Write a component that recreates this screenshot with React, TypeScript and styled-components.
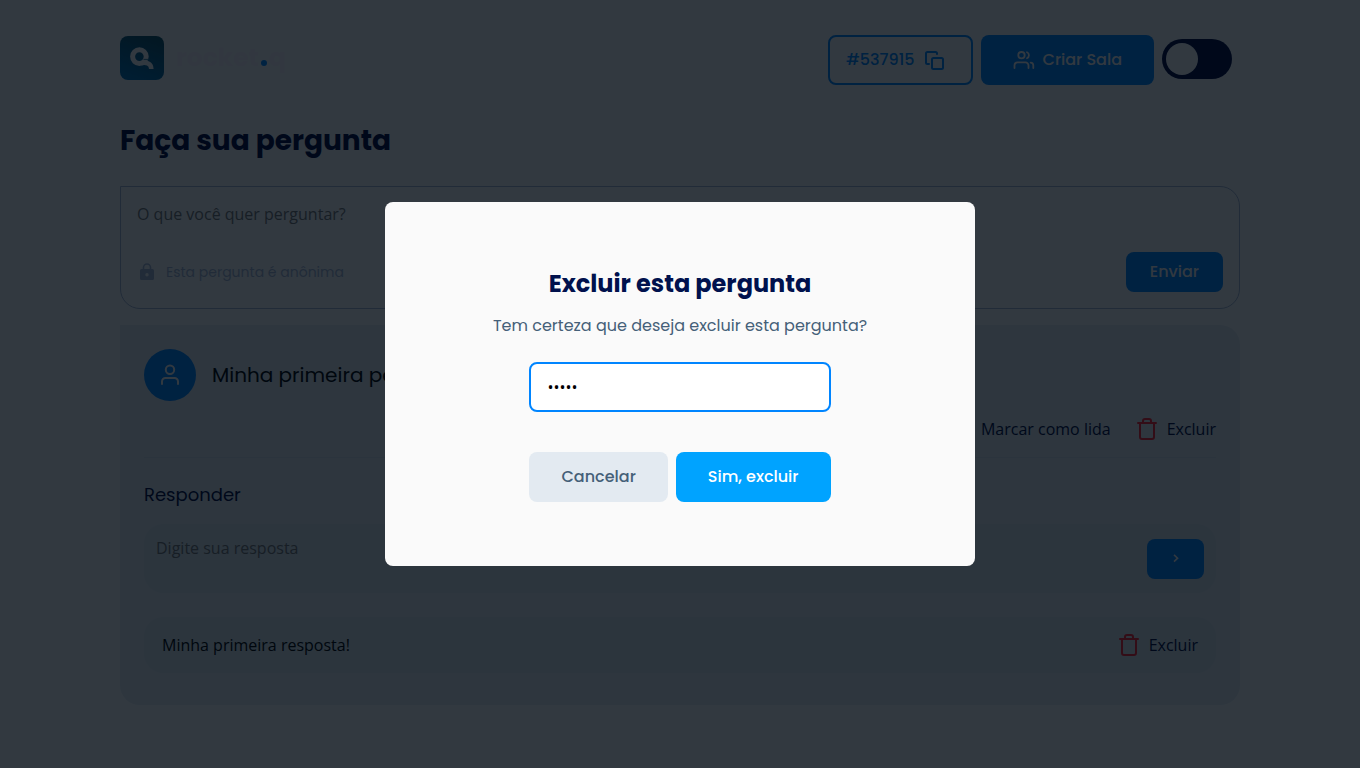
import React from "react";
import styled, { createGlobalStyle, css } from "styled-components";

const heading = `Poppins, "Open Sans", sans-serif`;
const body = `"Open Sans", "Noto Sans", sans-serif`;

const GlobalStyle = createGlobalStyle`
  *, *::before, *::after { box-sizing: border-box; margin: 0; padding: 0; }
  body { background: #fafafa; font: 400 16px/24px ${body}; color: #00093f; }
  button, input, textarea { font: inherit; }
  button { border: 0; background: none; cursor: pointer; }
  a { color: inherit; text-decoration: none; }
`;

const Page = styled.div`
  min-height: 100vh;
  padding: 0 24px;
`;

const Container = styled.div`
  max-width: 1120px;
  margin: 0 auto;
`;

const Header = styled.header`
  display: flex;
  align-items: center;
  justify-content: space-between;
  padding: 35px 8px 35px 0;
`;

const Brand = styled.a`
  display: flex;
  align-items: center;
  gap: 12px;
  padding-bottom: 4px;
`;

const Wordmark = styled.span`
  display: flex;
  align-items: baseline;
  font: 700 25px/42px ${heading};
  color: #fbeffa;
`;

const Dot = styled.i`
  width: 6px;
  height: 6px;
  margin: 0 2px;
  border-radius: 50%;
  background: #0085ff;
`;

const HeaderActions = styled.div`
  display: flex;
  align-items: center;
  gap: 8px;
`;

const Button = styled.button<{ $tone?: "outline" | "muted" | "bright"; $compact?: boolean }>`
  display: inline-flex;
  align-items: center;
  justify-content: center;
  gap: 8px;
  height: ${(p) => (p.$compact ? 40 : 50)}px;
  padding: 0 ${(p) => (p.$compact ? 24 : 32)}px;
  border-radius: 8px;
  font: 500 16px/24px ${heading};
  color: #fafafa;
  background: #0085ff;
  white-space: nowrap;
  ${(p) => p.$tone === "muted" && css`background: #e3eaf1; color: #456078;`}
  ${(p) => p.$tone === "bright" && css`background: #00a3ff; color: #fff;`}
  ${(p) => p.$tone === "outline" && css`
    gap: 10px;
    padding: 0 27px 0 16px;
    border: 2px solid #0085ff;
    background: none;
    color: #0085ff;
  `}
`;

const SendButton = styled(Button)`
  min-width: 57px;
`;

const Toggle = styled.input`
  appearance: none;
  display: flex;
  align-items: center;
  width: 70px;
  height: 40px;
  margin-bottom: 2px;
  padding: 4px;
  border-radius: 20px;
  background: #00093f;
  cursor: pointer;

  &::before {
    content: "";
    width: 32px;
    height: 32px;
    border-radius: 50%;
    background: #fafafa;
  }
  &:checked { justify-content: flex-end; }
`;

const PageTitle = styled.h1`
  font: 700 28px/42px ${heading};
  color: #00093f;
`;

const AskForm = styled.form`
  margin-top: 24px;
  padding: 15px 16px 16px;
  border: 1px solid #a5b4d2;
  border-radius: 0 20px 20px 20px;
`;

const TextArea = styled.textarea<{ $height: number }>`
  display: block;
  flex: 1;
  width: 100%;
  height: ${(p) => p.$height}px;
  border: 0;
  outline: 0;
  resize: none;
  background: none;
  color: #00093f;
  &::placeholder { color: #757575; opacity: 1; }
`;

const FormFooter = styled.div`
  display: flex;
  align-items: center;
  justify-content: space-between;
`;

const Anonymous = styled.p`
  display: flex;
  align-items: center;
  gap: 9px;
  font: 400 14px/20px ${heading};
  color: #a5b4d2;
`;

const QuestionCard = styled.section`
  margin: 16px 0 24px;
  padding: 24px 24px 32px;
  border-radius: 0 20px 20px 20px;
  background: #e3eaf1;
`;

const Question = styled.div`
  display: flex;
  align-items: center;
  gap: 16px;
  font: 400 20px/30px ${heading};
  color: #000;
`;

const Avatar = styled.span`
  display: grid;
  place-items: center;
  width: 52px;
  height: 52px;
  border-radius: 50%;
  background: #0085ff;
`;

const QuestionActions = styled.div`
  display: flex;
  justify-content: flex-end;
  gap: 24px;
  padding: 16px 0;
  border-bottom: 1px solid #d8e2ea;
`;

const Action = styled.button`
  display: inline-flex;
  align-items: center;
  gap: 8px;
  color: #00093f;
`;

const ReplyTitle = styled.h2`
  margin: 24px 0 16px;
  font: 400 18px/26px ${heading};
  color: #00093f;
`;

const ReplyForm = styled.form`
  display: flex;
  align-items: center;
  gap: 12px;
  padding: 12px;
  border-radius: 20px;
  background: #dbe4ea;
`;

const Reply = styled.div`
  display: flex;
  align-items: center;
  justify-content: space-between;
  margin-top: 24px;
  padding: 16px 18px;
  border-radius: 20px;
  background: #dbe4ea;
  color: #000;
`;

const Overlay = styled.div`
  position: fixed;
  inset: 0;
  display: grid;
  place-items: center;
  padding: 24px;
  background: rgba(0, 9, 18, 0.8);
`;

const Modal = styled.div`
  display: flex;
  flex-direction: column;
  align-items: center;
  width: 100%;
  max-width: 590px;
  padding: 64px 24px;
  border-radius: 8px;
  background: #fafafa;
  text-align: center;
`;

const ModalTitle = styled.h2`
  font: 700 24px/36px ${heading};
  color: #00114d;
`;

const ModalText = styled.p`
  margin: 12px 0 24px;
  font: 400 16px/24px ${heading};
  color: #456078;
`;

const ModalForm = styled.form`
  display: flex;
  flex-direction: column;
  gap: 40px;
`;

const Password = styled.input`
  width: 100%;
  height: 50px;
  padding: 0 16px;
  border: 2px solid #0085ff;
  border-radius: 8px;
  outline: 0;
  background: #fff;
  color: #000;
`;

const ModalButtons = styled.div`
  display: flex;
  gap: 8px;
`;

const LogoMark = () => (
  <svg width="44" height="44" viewBox="0 0 44 44" fill="none" aria-hidden="true">
    <defs>
      <linearGradient id="mark" x1="30" y1="0" x2="14" y2="44" gradientUnits="userSpaceOnUse">
        <stop stopColor="#0e4f66" />
        <stop offset="1" stopColor="#0070b4" />
      </linearGradient>
    </defs>
    <rect width="44" height="44" rx="8" fill="url(#mark)" />
    <circle cx="19.4" cy="20.6" r="6.8" stroke="#fafafa" strokeWidth="5" />
    <path d="M21 27.200c4.600-1.200 10.300 0 10.300 5.800" stroke="#fafafa" strokeWidth="4.600" />
    <path d="M23.500 23.400h4.800" stroke="#0b5f88" strokeWidth=".8" />
  </svg>
);

const CopyIcon = () => (
  <svg width="19" height="19" viewBox="0 0 19 19" fill="none" stroke="currentColor" strokeWidth="2" strokeLinecap="round" strokeLinejoin="round" aria-hidden="true">
    <rect x="7" y="7" width="11" height="11" rx="1.500" />
    <path d="M4 13H2.500A1.500 1.500 0 0 1 1 11.500v-9A1.500 1.500 0 0 1 2.500 1h8A1.500 1.500 0 0 1 12 2.500V3" />
  </svg>
);

const UsersIcon = () => (
  <svg width="22" height="18" viewBox="0 0 22 18" fill="none" stroke="currentColor" strokeWidth="1.800" strokeLinecap="round" aria-hidden="true">
    <circle cx="8.500" cy="4.200" r="3.200" />
    <path d="M1.500 17v-2.600a3 3 0 0 1 3-3h8a3 3 0 0 1 3 3V17M14 1.200a3.300 3.300 0 0 1 0 6M17.700 11.600a2.900 2.900 0 0 1 2.600 2.900V17" />
  </svg>
);

const UserIcon = () => (
  <svg width="20" height="22" viewBox="0 0 20 22" fill="none" stroke="#fafafa" strokeWidth="2" strokeLinecap="round" aria-hidden="true">
    <circle cx="10" cy="5.800" r="4.200" />
    <path d="M2 20v-2.500A3.500 3.500 0 0 1 5.500 14h9a3.500 3.500 0 0 1 3.500 3.500V20" />
  </svg>
);

const LockIcon = () => (
  <svg width="20" height="20" viewBox="0 0 20 20" aria-hidden="true">
    <path d="M6.500 8V5.500a3.500 3.500 0 0 1 7 0V8" fill="none" stroke="currentColor" strokeWidth="1.600" />
    <path fill="currentColor" fillRule="evenodd" d="M4.500 7h11A1.500 1.500 0 0 1 17 8.500v8a1.500 1.500 0 0 1-1.500 1.500h-11A1.500 1.500 0 0 1 3 16.500v-8A1.500 1.500 0 0 1 4.500 7Zm5.500 4a1.700 1.700 0 1 0 0 3.400 1.700 1.700 0 0 0 0-3.400Z" />
  </svg>
);

const TrashIcon = () => (
  <svg width="24" height="24" viewBox="0 0 24 24" fill="none" stroke="#ff1f2e" strokeWidth="2" strokeLinecap="round" strokeLinejoin="round" aria-hidden="true">
    <path d="M3 6h18M19 6v14a2 2 0 0 1-2 2H7a2 2 0 0 1-2-2V6M8 6V4a2 2 0 0 1 2-2h4a2 2 0 0 1 2 2v2" />
  </svg>
);

const CheckIcon = () => (
  <svg width="24" height="24" viewBox="0 0 24 24" fill="none" stroke="#0085ff" strokeWidth="2" strokeLinecap="round" strokeLinejoin="round" aria-hidden="true">
    <path d="M22 11v1a10 10 0 1 1-6-9.100M22 4 12 14l-3-3" />
  </svg>
);

const ChevronIcon = () => (
  <svg width="6" height="10" viewBox="0 0 6 10" fill="none" stroke="currentColor" strokeWidth="1.600" aria-hidden="true">
    <path d="m1 .8 3.600 3.400L1 7.600" />
  </svg>
);

export default function App() {
  return (
    <>
      <GlobalStyle />
      <Page>
        <Container>
          <Header>
            <Brand href="#" aria-label="rocket.q">
              <LogoMark />
              <Wordmark>rocket<Dot />q</Wordmark>
            </Brand>
            <HeaderActions>
              <Button $tone="outline" type="button">#537915<CopyIcon /></Button>
              <Button type="button"><UsersIcon />Criar Sala</Button>
              <Toggle type="checkbox" aria-label="Tema escuro" />
            </HeaderActions>
          </Header>
          <main>
            <PageTitle>Faça sua pergunta</PageTitle>
            <AskForm>
              <TextArea $height={50} aria-label="Pergunta" placeholder="O que você quer perguntar?" />
              <FormFooter>
                <Anonymous><LockIcon />Esta pergunta é anônima</Anonymous>
                <Button $compact type="button">Enviar</Button>
              </FormFooter>
            </AskForm>
            <QuestionCard>
              <Question>
                <Avatar><UserIcon /></Avatar>
                <p>Minha primeira pergunta!</p>
              </Question>
              <QuestionActions>
                <Action type="button"><CheckIcon />Marcar como lida</Action>
                <Action type="button"><TrashIcon />Excluir</Action>
              </QuestionActions>
              <ReplyTitle>Responder</ReplyTitle>
              <ReplyForm>
                <TextArea $height={45} aria-label="Resposta" placeholder="Digite sua resposta" />
                <SendButton $compact type="button" aria-label="Enviar resposta"><ChevronIcon /></SendButton>
              </ReplyForm>
              <Reply>
                <p>Minha primeira resposta!</p>
                <Action type="button"><TrashIcon />Excluir</Action>
              </Reply>
            </QuestionCard>
          </main>
        </Container>
      </Page>
      <Overlay>
        <Modal role="dialog" aria-modal="true" aria-labelledby="modal-title">
          <ModalTitle id="modal-title">Excluir esta pergunta</ModalTitle>
          <ModalText>Tem certeza que deseja excluir esta pergunta?</ModalText>
          <ModalForm>
            <Password type="password" aria-label="Senha" defaultValue="12345" />
            <ModalButtons>
              <Button $tone="muted" type="button">Cancelar</Button>
              <Button $tone="bright" type="button">Sim, excluir</Button>
            </ModalButtons>
          </ModalForm>
        </Modal>
      </Overlay>
    </>
  );
}
